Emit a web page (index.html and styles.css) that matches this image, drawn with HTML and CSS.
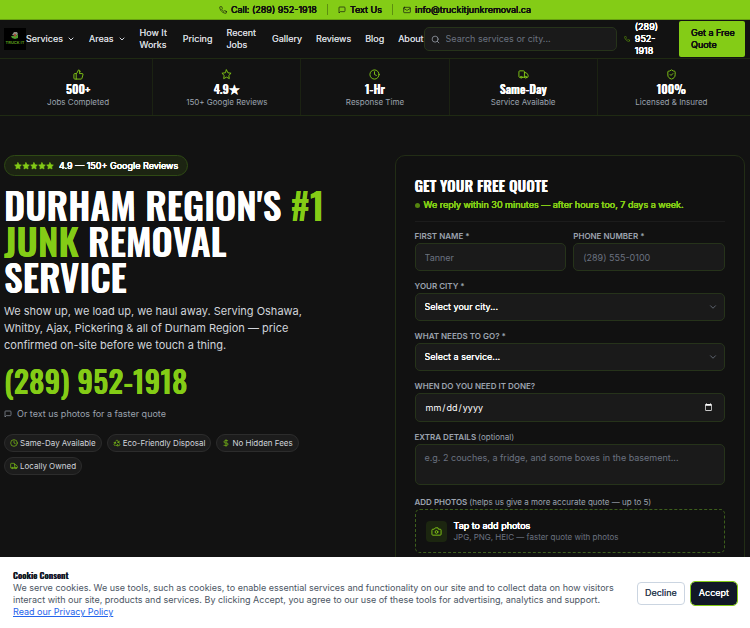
FILE: index.html
```html
<!DOCTYPE html>
<html lang="en">

<head>
    <meta charset="utf-8">
    <meta name="viewport" content="width=device-width, initial-scale=1">
    <title>Truck It Junk Removal</title>
    <link rel="stylesheet" href="styles.css">
</head>

<body>
    <!-- icons -->
    <svg class="sprite" aria-hidden="true">
        <symbol id="phone" viewBox="0 0 24 24"><path d="M22 16.92v3a2 2 0 0 1-2.18 2 19.79 19.79 0 0 1-8.63-3.07 19.5 19.5 0 0 1-6-6 19.79 19.79 0 0 1-3.07-8.67A2 2 0 0 1 4.11 2h3a2 2 0 0 1 2 1.72 12.84 12.84 0 0 0 .7 2.81 2 2 0 0 1-.45 2.11L8.09 9.91a16 16 0 0 0 6 6l1.27-1.27a2 2 0 0 1 2.11-.45 12.84 12.84 0 0 0 2.81.7A2 2 0 0 1 22 16.92z"/></symbol>
        <symbol id="message" viewBox="0 0 24 24"><path d="M21 15a2 2 0 0 1-2 2H7l-4 4V5a2 2 0 0 1 2-2h14a2 2 0 0 1 2 2z"/></symbol>
        <symbol id="mail" viewBox="0 0 24 24"><rect x="2" y="4" width="20" height="16" rx="2"/><path d="m22 7-8.97 5.7a1.94 1.94 0 0 1-2.06 0L2 7"/></symbol>
        <symbol id="chevron" viewBox="0 0 24 24"><path d="m6 9 6 6 6-6"/></symbol>
        <symbol id="search" viewBox="0 0 24 24"><circle cx="11" cy="11" r="8"/><path d="m21 21-4.3-4.3"/></symbol>
        <symbol id="thumb" viewBox="0 0 24 24"><path d="M7 10v12M15 5.88 14 10h5.83a2 2 0 0 1 1.92 2.56l-2.33 8A2 2 0 0 1 17.5 22H4a2 2 0 0 1-2-2v-8a2 2 0 0 1 2-2h2.76a2 2 0 0 0 1.79-1.11L12 2a3.13 3.13 0 0 1 3 3.88Z"/></symbol>
        <symbol id="star" viewBox="0 0 24 24"><path d="m12 2 3.09 6.26L22 9.27l-5 4.87 1.18 6.88L12 17.77l-6.18 3.25L7 14.14 2 9.27l6.91-1.01z"/></symbol>
        <symbol id="clock" viewBox="0 0 24 24"><circle cx="12" cy="12" r="10"/><path d="M12 6v6l4 2"/></symbol>
        <symbol id="truck" viewBox="0 0 24 24"><path d="M14 18V6a2 2 0 0 0-2-2H4a2 2 0 0 0-2 2v11a1 1 0 0 0 1 1h2M15 18H9M19 18h2a1 1 0 0 0 1-1v-3.65a1 1 0 0 0-.22-.62l-3.48-4.35A1 1 0 0 0 17.52 8H14"/><circle cx="17" cy="18" r="2"/><circle cx="7" cy="18" r="2"/></symbol>
        <symbol id="shield" viewBox="0 0 24 24"><path d="M20 13c0 5-3.5 7.5-7.66 8.95a1 1 0 0 1-.67-.01C7.5 20.5 4 18 4 13V6a1 1 0 0 1 1-1c2 0 4.5-1.2 6.24-2.72a1.17 1.17 0 0 1 1.52 0C14.51 3.81 17 5 19 5a1 1 0 0 1 1 1z"/><path d="m9 12 2 2 4-4"/></symbol>
        <symbol id="recycle" viewBox="0 0 24 24"><path d="M7 19H4.8a1.8 1.8 0 0 1-1.57-2.7L7.2 9.5M11 19h8.2a1.8 1.8 0 0 0 1.55-2.7l-1.22-2.12M14 16l-3 3 3 3M8.3 13.6 7.2 9.5 3.1 10.6M9.3 5.8l1.1-1.9a1.8 1.8 0 0 1 3.13 0l3.98 6.87M13.4 9.7l4.1 1.1 1.1-4.1"/></symbol>
        <symbol id="dollar" viewBox="0 0 24 24"><path d="M12 2v20M17 5H9.5a3.5 3.5 0 0 0 0 7h5a3.5 3.5 0 0 1 0 7H6"/></symbol>
        <symbol id="camera" viewBox="0 0 24 24"><path d="M14.5 4h-5L7 7H4a2 2 0 0 0-2 2v9a2 2 0 0 0 2 2h16a2 2 0 0 0 2-2V9a2 2 0 0 0-2-2h-3z"/><circle cx="12" cy="13" r="3"/></symbol>
    </svg>

    <div class="topbar">
        <a href="tel:2899521918"><svg class="icon"><use href="#phone"/></svg>Call: (289) 952-1918</a>
        <a href="sms:2899521918"><svg class="icon"><use href="#message"/></svg>Text Us</a>
        <a href="mailto:info@truckitjunkremoval.ca"><svg class="icon"><use href="#mail"/></svg>info@truckitjunkremoval.ca</a>
    </div>

    <header class="header">
        <a class="logo" href="#" aria-label="Truck It">
            <svg viewBox="0 0 22 22" width="22" height="22">
                <rect width="22" height="22" fill="#000"/>
                <path d="M8 7l2-3 3 0 1 2-2 2z" fill="#8d8a80"/>
                <path d="M7 8l5 0 2-2 0 4-3 1-3-1z" fill="#4e9a2e"/>
                <path d="M10 6l2 0 0 2-2 1z" fill="#a34d35"/>
                <text x="11" y="16" text-anchor="middle" class="logo-text">TRUCK IT</text>
            </svg>
        </a>
        <nav class="nav">
            <a href="#">Services <svg class="icon"><use href="#chevron"/></svg></a>
            <a href="#">Areas <svg class="icon"><use href="#chevron"/></svg></a>
            <a href="#" class="two-line">How It<br>Works</a>
            <a href="#">Pricing</a>
            <a href="#" class="two-line">Recent<br>Jobs</a>
            <a href="#">Gallery</a>
            <a href="#">Reviews</a>
            <a href="#">Blog</a>
            <a href="#">About</a>
        </nav>
        <label class="search">
            <svg class="icon"><use href="#search"/></svg>
            <input type="search" placeholder="Search services or city..." aria-label="Search">
        </label>
        <a class="header-phone" href="tel:2899521918"><svg class="icon"><use href="#phone"/></svg><span>(289)<br>952-<br>1918</span></a>
        <a class="header-cta" href="#quote">Get a Free Quote</a>
    </header>

    <section class="stats">
        <div class="stat"><svg class="icon"><use href="#thumb"/></svg><strong>500+</strong><span>Jobs Completed</span></div>
        <div class="stat"><svg class="icon"><use href="#star"/></svg><strong>4.9★</strong><span>150+ Google Reviews</span></div>
        <div class="stat"><svg class="icon"><use href="#clock"/></svg><strong>1-Hr</strong><span>Response Time</span></div>
        <div class="stat"><svg class="icon"><use href="#truck"/></svg><strong>Same-Day</strong><span>Service Available</span></div>
        <div class="stat"><svg class="icon"><use href="#shield"/></svg><strong>100%</strong><span>Licensed &amp; Insured</span></div>
    </section>

    <main class="hero">
        <div class="intro">
            <div class="rating">
                <span class="stars">
                    <svg class="icon"><use href="#star"/></svg><svg class="icon"><use href="#star"/></svg><svg class="icon"><use href="#star"/></svg><svg class="icon"><use href="#star"/></svg><svg class="icon"><use href="#star"/></svg>
                </span>
                4.9 — 150+ Google Reviews
            </div>
            <h1>Durham Region's <em>#1<br>Junk</em> Removal<br>Service</h1>
            <p class="lead">We show up, we load up, we haul away. Serving Oshawa, Whitby, Ajax, Pickering &amp; all of Durham Region — price confirmed on-site before we touch a thing.</p>
            <a class="big-phone" href="tel:2899521918">(289) 952-1918</a>
            <a class="text-us" href="sms:2899521918"><svg class="icon"><use href="#message"/></svg>Or text us photos for a faster quote</a>
            <ul class="chips">
                <li><svg class="icon"><use href="#clock"/></svg>Same-Day Available</li>
                <li><svg class="icon"><use href="#recycle"/></svg>Eco-Friendly Disposal</li>
                <li><svg class="icon"><use href="#dollar"/></svg>No Hidden Fees</li>
                <li><svg class="icon"><use href="#truck"/></svg>Locally Owned</li>
            </ul>
        </div>

        <form class="card" id="quote">
            <h2>Get Your Free Quote</h2>
            <p class="reply">We reply within 30 minutes — after hours too, 7 days a week.</p>
            <div class="row">
                <div class="field">
                    <label for="name">First Name *</label>
                    <input type="text" id="name" placeholder="Tanner">
                </div>
                <div class="field">
                    <label for="tel">Phone Number *</label>
                    <input type="tel" id="tel" placeholder="(289) 555-0100">
                </div>
            </div>
            <div class="field">
                <label for="city">Your City *</label>
                <div class="select">
                    <select id="city"><option>Select your city...</option></select>
                    <svg class="icon"><use href="#chevron"/></svg>
                </div>
            </div>
            <div class="field">
                <label for="service">What needs to go? *</label>
                <div class="select">
                    <select id="service"><option>Select a service...</option></select>
                    <svg class="icon"><use href="#chevron"/></svg>
                </div>
            </div>
            <div class="field">
                <label for="date">When do you need it done?</label>
                <input type="date" id="date">
            </div>
            <div class="field">
                <label for="details">Extra details <small>(optional)</small></label>
                <textarea id="details" placeholder="e.g. 2 couches, a fridge, and some boxes in the basement..."></textarea>
            </div>
            <div class="field">
                <label for="photos">Add photos <small>(helps us give a more accurate quote — up to 5)</small></label>
                <button type="button" class="upload" id="photos">
                    <span class="upload-icon"><svg class="icon"><use href="#camera"/></svg></span>
                    <span class="upload-text"><b>Tap to add photos</b>JPG, PNG, HEIC — faster quote with photos</span>
                </button>
            </div>
        </form>
    </main>

    <div class="cookie" role="dialog" aria-label="Cookie Consent">
        <div class="cookie-text">
            <h3>Cookie Consent</h3>
            <p>We serve cookies. We use tools, such as cookies, to enable essential services and functionality on our site and to collect data on how visitors interact with our site, products and services. By clicking Accept, you agree to our use of these tools for advertising, analytics and support. <a href="#">Read our Privacy Policy</a></p>
        </div>
        <button type="button" class="decline">Decline</button>
        <button type="button" class="accept">Accept</button>
    </div>
</body>

</html>
```
FILE: styles.css
```css
* {
    box-sizing: border-box;
}

body {
    margin: 0;
    min-height: 100vh;
    background: #121212;
    color: #fff;
    font-family: Inter, "Liberation Sans", sans-serif;
    font-size: 9px;
    line-height: 12px;
}

a {
    color: inherit;
    text-decoration: none;
}

h1, h2, h3, p, ul {
    margin: 0;
    padding: 0;
}

h1, h2, h3, .stat strong, .big-phone {
    font-family: Oswald, "Liberation Sans Narrow", "Roboto Condensed", sans-serif;
    font-weight: 600;
    text-shadow: 0 0 0 currentColor;
}

input, select, textarea, button {
    font: inherit;
    color: inherit;
}

.topbar, .header-phone, .header-cta, .rating, .reply, .upload-text b {
    font-weight: 400;
    text-shadow: 0 0 0 currentColor, 0 0 0 currentColor, 0 0 0 currentColor;
}

.sprite {
    display: none;
}

.icon {
    width: 8px;
    height: 8px;
    flex: none;
    fill: none;
    stroke: currentColor;
    stroke-width: 2;
    stroke-linecap: round;
    stroke-linejoin: round;
}

/* top bar */
.topbar {
    display: flex;
    justify-content: center;
    height: 20px;
    padding: 4px;
    background: #84cc16;
    border-bottom: 1px solid #67a010;
    color: #111;
}

.topbar a {
    display: flex;
    align-items: center;
    gap: 4px;
}

.topbar a + a {
    margin-left: 10px;
    padding-left: 10px;
    border-left: 1px solid #5c8f10;
}

/* header */
.header {
    display: flex;
    align-items: center;
    height: 39px;
    padding: 0 5px 0 4px;
    border-bottom: 1px solid #1f2a12;
}

.logo {
    height: 22px;
}

.logo-text {
    font: 700 4px Inter, sans-serif;
    fill: #5c9c1c;
}

.nav {
    display: flex;
    align-items: center;
    gap: 14px;
    color: #d1d5db;
    text-shadow: 0 0 0 currentColor;
}

.nav a {
    display: flex;
    align-items: center;
    gap: 4px;
}

.nav .icon {
    stroke-width: 3;
}

.nav .two-line {
    padding-right: 2px;
}

.search {
    flex: 1;
    display: flex;
    align-items: center;
    gap: 6px;
    height: 24px;
    padding: 0 6px;
    background: #1a1a1a;
    border: 1px solid #26331a;
    border-radius: 5px;
    color: #9ca3af;
}

.search .icon {
    width: 9px;
    height: 9px;
}

.search input {
    flex: 1;
    min-width: 0;
    padding: 0;
    border: 0;
    outline: 0;
    background: none;
}

::placeholder {
    color: #6b7280;
    opacity: 1;
}

.header-phone {
    display: flex;
    align-items: center;
    gap: 5px;
    margin: 0 21px 0 7px;
}

.header-phone .icon {
    width: 6px;
    color: #65a30d;
}

.header-cta {
    width: 66px;
    padding: 6px 8px 6px 12px;
    background: #84cc16;
    border-radius: 2px;
    color: #111;
}

/* stats */
.stats {
    display: grid;
    grid-template-columns: repeat(5, 1fr);
    padding: 0 5px 0 4px;
    border-bottom: 1px solid #1f2a12;
}

.stat {
    display: flex;
    flex-direction: column;
    align-items: center;
    padding: 10px 0 8px;
    color: #9ca3af;
    font-size: 8px;
    line-height: 10px;
}

.stat + .stat {
    border-left: 1px solid #1b2212;
}

.stat .icon {
    width: 11px;
    height: 11px;
    color: #84cc16;
}

.stat strong {
    margin-top: 1px;
    color: #fff;
    font-size: 12px;
    line-height: 16px;
}

/* hero */
.hero {
    display: grid;
    grid-template-columns: 1fr 1fr;
    gap: 40px;
    padding: 39px 5px 0 4px;
}

.rating {
    display: inline-flex;
    align-items: center;
    gap: 5px;
    height: 21px;
    padding: 0 9px;
    border: 1px solid #2f4a14;
    border-radius: 11px;
    background: #1c2412;
}

.stars {
    display: flex;
    color: #84cc16;
}

.stars .icon {
    fill: currentColor;
}

h1 {
    margin-top: 11px;
    font-size: 37px;
    line-height: 36px;
    text-transform: uppercase;
    white-space: nowrap;
}

h1 em {
    color: #84cc16;
    font-style: normal;
}

.lead {
    max-width: 320px;
    margin-top: 8px;
    color: #d1d5db;
    font-size: 11px;
    line-height: 17px;
}

.big-phone {
    display: block;
    margin-top: 8px;
    color: #84cc16;
    font-size: 30px;
    line-height: 38px;
}

.text-us {
    display: flex;
    align-items: center;
    gap: 5px;
    margin-top: 8px;
    color: #9ca3af;
}

.chips {
    display: flex;
    flex-wrap: wrap;
    gap: 5px;
    max-width: 320px;
    margin-top: 14px;
    list-style: none;
}

.chips li {
    display: flex;
    align-items: center;
    gap: 2px;
    height: 18px;
    padding: 0 5px;
    border: 1px solid #2c2c2c;
    border-radius: 9px;
    background: #1c1c1c;
    color: #d1d5db;
    font-size: 8px;
}

.chips .icon {
    color: #84cc16;
}

/* quote form */
.card {
    padding: 19px 19px 24px;
    border: 1px solid #222d15;
    border-radius: 10px;
    background: #111;
}

h2 {
    font-size: 15px;
    line-height: 20px;
    text-transform: uppercase;
}

.reply {
    display: flex;
    align-items: center;
    gap: 4px;
    margin: 4px 0 9px;
    padding-bottom: 10px;
    border-bottom: 1px solid #1c1c1c;
    color: #84cc16;
}

.reply::before {
    content: "";
    width: 5px;
    height: 5px;
    border-radius: 50%;
    background: #55850f;
}

.row {
    display: grid;
    grid-template-columns: 1fr 1fr;
    gap: 7px;
}

.field {
    margin-bottom: 10px;
}

.field label {
    display: block;
    margin-bottom: 2px;
    color: #9ca3af;
    font-size: 8px;
    font-weight: 600;
    line-height: 10px;
    text-transform: uppercase;
}

.field small {
    font-size: 8px;
    font-weight: 400;
    text-transform: none;
}

.field input, .field select, .field textarea {
    display: block;
    width: 100%;
    height: 28px;
    padding: 0 9px;
    border: 1px solid #26331a;
    border-radius: 5px;
    background: #1a1a1a;
    outline: 0;
}

.field select {
    appearance: none;
    text-shadow: 0 0 0 currentColor;
}

.select {
    display: grid;
    align-items: center;
}

.select > * {
    grid-area: 1 / 1;
}

.select .icon {
    justify-self: end;
    width: 10px;
    height: 10px;
    margin-right: 7px;
    color: #6b7280;
    pointer-events: none;
}

.field input[type=date] {
    height: 29px;
    color-scheme: dark;
}

.field textarea {
    height: 41px;
    margin-bottom: 12px;
    padding: 7px 9px;
    resize: none;
}

.upload {
    display: flex;
    align-items: center;
    gap: 7px;
    width: 100%;
    height: 44px;
    padding: 0 10px;
    border: 1px dashed #3d5f1c;
    border-radius: 5px;
    background: none;
    text-align: left;
}

.upload-icon {
    display: grid;
    place-items: center;
    width: 21px;
    height: 21px;
    border-radius: 4px;
    background: #1c2610;
    color: #84cc16;
}

.upload-icon .icon {
    width: 11px;
    height: 11px;
}

.upload-text {
    color: #6b7280;
    font-size: 8px;
    line-height: 10px;
}

.upload-text b {
    display: block;
    color: #fff;
    font-size: 9px;
    line-height: 12px;
}

/* cookie banner */
.cookie {
    position: fixed;
    right: 0;
    bottom: 0;
    left: 0;
    display: flex;
    align-items: center;
    padding: 11px 13px 10px;
    background: #fff;
    color: #4b5563;
}

.cookie-text {
    flex: 1;
    margin-right: 16px;
}

.cookie h3 {
    color: #111827;
    font-size: 9px;
    line-height: 14px;
}

.cookie a {
    color: #2563eb;
    text-decoration: underline;
}

.cookie button {
    height: 23px;
    padding: 0 7px;
    border: 1px solid #cbd5e1;
    border-radius: 4px;
    background: #fff;
    color: #334155;
    text-shadow: 0 0 0 currentColor;
}

.cookie .accept {
    margin-left: 6px;
    border-color: #111827;
    background: #111827;
    color: #fff;
    outline: 1px solid #84cc16;
}
```
